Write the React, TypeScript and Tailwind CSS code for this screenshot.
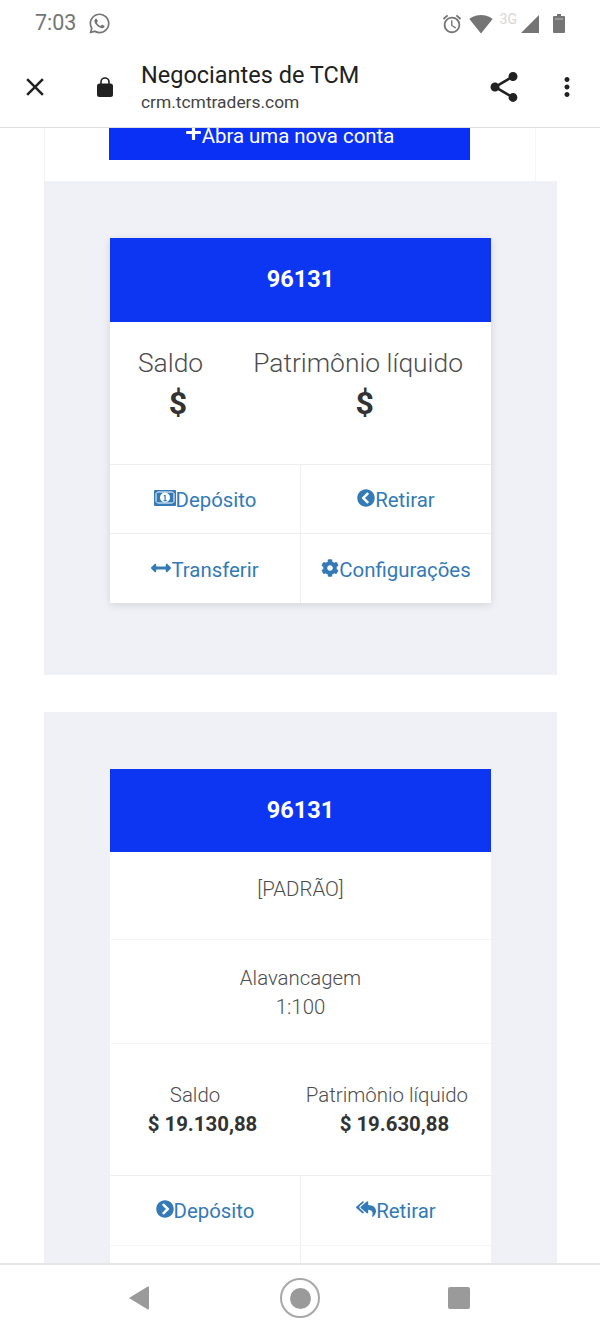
import React from 'react'
import {
  FaArrowsAltH,
  FaChevronCircleLeft,
  FaChevronCircleRight,
  FaCog,
  FaPlus,
  FaReplyAll,
  FaWhatsapp,
} from 'react-icons/fa'
import { MdAccessAlarm, MdClose, MdMoreVert, MdShare, MdSignalWifi4Bar } from 'react-icons/md'

const ActionCell = ({ icon, label, right, low }: { icon: React.ReactNode; label: string; right?: boolean; low?: boolean }) => (
  <div className={`flex items-center justify-center ${low ? 'pt-[3px]' : 'pt-[2px]'} text-[20.4px] leading-none text-[#337ab7] ${right ? 'border-l border-[#eeeeee]' : ''}`}>
    <span className="-mt-[5px]">{icon}</span>
    <span>{label}</span>
  </div>
)

const MoneyIcon = () => (
  <svg viewBox="0 0 22 16" className="h-[16px] w-[22px]">
    <path d="M1 0h20a1 1 0 0 1 1 1v14a1 1 0 0 1-1 1H1a1 1 0 0 1-1-1V1a1 1 0 0 1 1-1z" fill="#337ab7" />
    <path d="M2 3.500 3.500 2h15L20 3.500v8L18.500 13h-15L2 11.500z" fill="#337ab7" stroke="#ffffff" strokeWidth="1" />
    <circle cx="11" cy="7.500" r="5" fill="#ffffff" />
    <path d="M9.800 5h1.900v5h1v1.200H9.500V10h1V6.300h-.7z" fill="#337ab7" />
  </svg>
)

const CardHeader = ({ h }: { h: string }) => (
  <div className={`${h} flex items-center justify-center bg-[#0d36f2] text-[23.5px] font-bold text-white`}>96131</div>
)

const App = () => {
  return (
    <div className="flex h-[1333px] w-[600px] flex-col overflow-hidden bg-white font-['Roboto',sans-serif]">
      {/* status bar */}
      <div className="flex h-[47px] shrink-0 items-center justify-between pl-[35px] pr-[35px] text-[#757575]">
        <div className="flex items-center gap-[12px]">
          <span className="text-[21.5px]">7:03</span>
          <FaWhatsapp className="h-[23px] w-[23px]" />
        </div>
        <div className="flex items-center">
          <MdAccessAlarm className="h-[22px] w-[22px]" />
          <MdSignalWifi4Bar className="ml-[6px] h-[24px] w-[24px]" />
          <span className="ml-[7px] -mt-[9px] text-[14px] leading-none text-[#d6d6d6]">3G</span>
          <svg viewBox="0 0 18 18" className="ml-[4px] h-[18px] w-[18px]">
            <path d="M18 0v18H0z" fill="#757575" />
          </svg>
          <svg viewBox="0 0 12 19" className="ml-[14px] h-[19px] w-[12px]">
            <path d="M4 0h4v2h3a1 1 0 0 1 1 1v15a1 1 0 0 1-1 1H1a1 1 0 0 1-1-1V3a1 1 0 0 1 1-1h3z" fill="#757575" />
            <path d="M2 4.500h8v1H2z" fill="#bdbdbd" />
          </svg>
        </div>
      </div>

      {/* browser toolbar */}
      <div className="flex h-[81px] shrink-0 items-center border-b border-[#dedede] pl-[20px] pr-[18px] text-[#212121]">
        <MdClose className="h-[30px] w-[30px]" />
        <svg viewBox="0 0 16 20" className="ml-[47px] -mt-[1px] h-[20px] w-[16px]">
          <path d="M4 7V5a4 4 0 0 1 8 0v2" fill="none" stroke="#212121" strokeWidth="1.600" />
          <rect x="0" y="6.500" width="16" height="13.500" rx="2.500" fill="#212121" />
        </svg>
        <div className="ml-[28px] flex-1 pt-[2px]">
          <div className="text-[23.5px] leading-[28px]">Negociantes de TCM</div>
          <div className="text-[17.4px] leading-[26px] text-[#444444]">crm.tcmtraders.com</div>
        </div>
        <MdShare className="h-[36px] w-[36px]" />
        <MdMoreVert className="ml-[30px] h-[30px] w-[30px]" />
      </div>

      {/* page */}
      <div className="flex-1 overflow-hidden">
        <div className="ml-[44px] h-[53px] w-[492px] border-x border-[#f5f5f5] pl-[64px]">
          <div className="flex h-[32px] w-[361px] items-start justify-center bg-[#0a30f5] text-[20.4px] leading-[17px] text-white">
            <FaPlus className="mt-[-4px] h-[17px] w-[17px]" />
            <span>Abra uma nova conta</span>
          </div>
        </div>

        <div className="ml-[44px] h-[494px] w-[513px] bg-[#eff1f6] pl-[66px] pt-[57px]">
          <div className="w-[381px] bg-white shadow-[0_2px_8px_rgba(0,0,0,0.12)]">
            <CardHeader h="h-[84px]" />
            <div className="grid h-[143px] grid-cols-[1fr_auto] border-b border-[#eeeeee] pl-[25px] pr-[28px] pt-[25px] text-center text-[#4d4d4d]">
              <div className="w-[71px] text-[26.4px] font-light leading-[32px]">
                Saldo
                <div className="pl-[15px] text-[32px] font-bold leading-[48px] text-[#333333]">$</div>
              </div>
              <div className="text-[26.4px] font-light leading-[32px]">
                Patrimônio líquido
                <div className="pl-[13px] text-[32px] font-bold leading-[48px] text-[#333333]">$</div>
              </div>
            </div>
            <div className="grid h-[69px] grid-cols-[190px_1fr] border-b border-[#eeeeee]">
              <ActionCell icon={<MoneyIcon />} label="Depósito" />
              <ActionCell right icon={<FaChevronCircleLeft className="h-[18px] w-[18px]" />} label="Retirar" />
            </div>
            <div className="grid h-[69px] grid-cols-[190px_1fr]">
              <ActionCell low icon={<FaArrowsAltH className="h-[20px] w-[20px]" />} label="Transferir" />
              <ActionCell low right icon={<FaCog className="h-[18px] w-[18px]" />} label="Configurações" />
            </div>
          </div>
        </div>

        <div className="ml-[44px] mt-[37px] w-[513px] bg-[#eff1f6] pl-[66px] pt-[57px]">
          <div className="w-[381px] bg-white">
            <CardHeader h="h-[83px]" />
            <div className="h-[88px] border-b border-[#f5f5f5] pt-[24px] text-center text-[20.4px] font-light leading-[26px] text-[#4d4d4d]">[PADRÃO]</div>
            <div className="h-[104px] border-b border-[#f5f5f5] pt-[24px] text-center text-[20.4px] font-light leading-[29px] text-[#4d4d4d]">
              Alavancagem
              <div>1:100</div>
            </div>
            <div className="grid h-[132px] grid-cols-[1fr_auto] border-b border-[#eeeeee] pl-[20px] pr-[23px] pt-[37px] text-center text-[#4d4d4d]">
              <div className="w-[130px] text-[20.4px] font-light leading-[29px]">
                Saldo
                <div className="whitespace-nowrap pl-[15px] font-bold text-[#333333]">$ 19.130,88</div>
              </div>
              <div className="text-[20.4px] font-light leading-[29px]">
                Patrimônio líquido
                <div className="whitespace-nowrap pl-[15px] font-bold text-[#333333]">$ 19.630,88</div>
              </div>
            </div>
            <div className="grid h-[70px] grid-cols-[190px_1fr] border-b border-[#f5f5f5]">
              <ActionCell icon={<FaChevronCircleRight className="h-[18px] w-[18px]" />} label="Depósito" />
              <ActionCell right icon={<FaReplyAll className="h-[20px] w-[20px]" />} label="Retirar" />
            </div>
            <div className="grid h-[69px] grid-cols-[190px_1fr]">
              <div />
              <div className="border-l border-[#eeeeee]" />
            </div>
          </div>
        </div>
      </div>

      {/* android nav */}
      <div className="flex h-[70px] shrink-0 items-center border-t-2 border-[#e6e6e6] pb-[2px] pl-[128px]">
        <svg viewBox="0 0 22 24" className="h-[24px] w-[22px]">
          <path d="M21 1.500v21a1 1 0 0 1-1.600.8L1 12 19.400.7A1 1 0 0 1 21 1.500z" fill="#9a9a9a" />
        </svg>
        <div className="ml-[130px] flex h-[40px] w-[40px] items-center justify-center rounded-full border-[2.5px] border-[#a8a8a8]">
          <div className="h-[21px] w-[21px] rounded-full bg-[#9a9a9a]" />
        </div>
        <div className="ml-[128px] h-[22px] w-[22px] rounded-[2px] bg-[#9a9a9a]" />
      </div>
    </div>
  )
}

export default App
